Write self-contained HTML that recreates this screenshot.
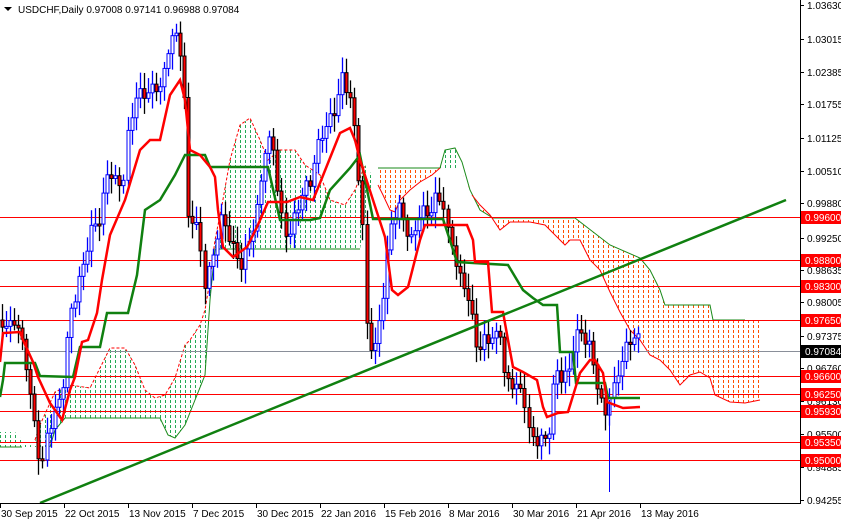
<!DOCTYPE html>
<html><head><meta charset="utf-8">
<style>
html,body{margin:0;padding:0;background:#fff;overflow:hidden}
svg{display:block}
text{font-family:"Liberation Sans","DejaVu Sans",sans-serif;font-size:10px}
</style></head>
<body>
<svg id="c" width="841" height="520" xmlns="http://www.w3.org/2000/svg">
<defs>
<clipPath id="cg1"><polygon points="0,432 15,432 22,440 30,445 40,447 25,447 0,447"/></clipPath>
<clipPath id="cg2"><polygon points="35,440 40,425 55,392 70,385 90,388 100,368 110,348 125,348 135,365 145,390 155,398 165,395 175,378 185,345 190,340 200,325 205,310 210,280 215,240 222,205 230,160 240,125 250,118 260,140 268,160 280,150 295,150 305,165 320,175 330,200 345,205 355,190 365,165 372,175 372,185 360,249 215,249 210,300 205,375 195,400 185,425 175,438 168,435 160,420 100,418 65,418 55,430 50,447 40,447"/></clipPath>
<clipPath id="co1"><polygon points="378,168 440,168 432,175 420,182 410,190 400,200 395,212 390,210 383,195 378,185"/></clipPath>
<clipPath id="cg3"><polygon points="440,168 445,150 455,148 460,160 460,168"/></clipPath>
<clipPath id="co2"><polygon points="460,168 470,190 480,210 493,218 575,218 610,245 640,258 650,270 660,290 665,305 710,305 713,320 760,320 760,400 745,403 730,402 715,395 710,378 700,372 690,375 680,385 670,370 660,360 650,355 640,340 630,330 620,312 610,292 600,270 590,260 580,240 570,240 565,245 560,240 545,225 530,222 510,222 500,230 490,215 480,205 472,195"/></clipPath>
</defs>
<rect width="841" height="520" fill="#fff"/>
<g id="clouds"></g>
<g>
<polyline fill="none" stroke="#1a8a1a" stroke-width="1" points="0,447 15,447 22,447"/>
<polyline fill="none" stroke="#ff0000" stroke-width="1" stroke-dasharray="3,2" points="35,440 40,425 55,392 70,385 90,388 100,368 110,348 125,348 135,365 145,390 155,398 165,395 175,378 185,345 190,340 200,325 205,310 210,280 215,240 222,205 230,160 240,125 250,118 260,140 268,160 280,150 295,150 305,165 320,175 330,200 345,205 355,190 365,165"/>
<polyline fill="none" stroke="#1a8a1a" stroke-width="1" points="50,447 55,430 65,418 160,418 168,435 175,438 185,425 195,400 205,375 210,300 215,249 360,249"/>
<polyline fill="none" stroke="#1a8a1a" stroke-width="1" points="378,168 440,168 445,150 455,148 462,162 470,190 480,210 493,218 575,218 610,245 640,258 650,270 660,290 665,305 710,305 713,320 745,320"/>
<polyline fill="none" stroke="#ff0000" stroke-width="1" points="378,185 383,195 390,210 395,212 400,200 410,190 420,182 432,175 440,168"/>
<polyline fill="none" stroke="#ff0000" stroke-width="1" points="472,195 480,205 490,215 500,230 510,222 530,222 545,225 560,240 565,245 570,240 580,240 590,260 600,270 610,292 620,312 630,330 640,340 650,355 660,360 670,370 680,385 690,375 700,372 710,378 715,395 730,402 745,403 760,400"/>
</g>
<g id="hl" stroke="#ff0000" stroke-width="1">
<line x1="0" x2="800" y1="217.5" y2="217.5"/>
<line x1="0" x2="800" y1="260.5" y2="260.5"/>
<line x1="0" x2="800" y1="286.5" y2="286.5"/>
<line x1="0" x2="800" y1="320.5" y2="320.5"/>
<line x1="0" x2="800" y1="376.5" y2="376.5"/>
<line x1="0" x2="800" y1="394.5" y2="394.5"/>
<line x1="0" x2="800" y1="411.5" y2="411.5"/>
<line x1="0" x2="800" y1="442.5" y2="442.5"/>
<line x1="0" x2="800" y1="460.5" y2="460.5"/>
</g>
<line x1="0" x2="800" y1="351.5" y2="351.5" stroke="#8a8f99" stroke-width="1"/>
<g id="candles"></g>
<polyline fill="none" stroke="#108010" stroke-width="2.5" points="0,397 3,380 5,363 35,363 40,376 73,377 80,347 100,347 107,313 128,313 137,275 145,210 160,200 175,175 185,155 205,155 210,167 268,167 280,220 310,220 320,218 330,190 350,168 360,155 373,219 443,219 457,262 508,265 523,290 533,298 543,305 557,305 560,352 573,352 576,383 605,383 608,398 640,398"/>
<polyline fill="none" stroke="#ff0000" stroke-width="2.5" points="0,362 3,333 20,332 23,340 33,362 38,377 50,403 62,420 70,390 75,377 82,342 88,340 97,313 102,280 110,235 125,200 140,150 150,140 160,140 170,95 180,80 185,100 190,150 200,155 210,167 215,177 218,210 223,247 233,257 247,247 257,227 268,202 287,202 300,197 313,200 320,183 330,158 340,133 350,128 355,140 360,160 385,237 392,290 398,295 408,287 420,240 425,225 467,225 473,240 475,262 488,262 492,312 503,312 508,340 513,367 523,372 537,380 543,407 547,417 558,413 568,412 580,373 590,360 595,360 603,373 607,402 623,408 640,407"/>
<line x1="40" y1="503" x2="786" y2="200" stroke="#108010" stroke-width="2.5"/>
<rect x="800" y="0" width="41" height="520" fill="#fff"/>
<rect x="0" y="503" width="841" height="17" fill="#fff"/>
<line x1="800.5" y1="0" x2="800.5" y2="504" stroke="#000"/>
<line x1="0" y1="503.5" x2="801" y2="503.5" stroke="#000"/>
<g id="axis" fill="#000"></g>
<text x="18" y="13" font-size="10.5">USDCHF,Daily  0.97008 0.97141 0.96988 0.97084</text>
<polygon points="4,7 12,7 8,11" fill="#000"/>
</svg>
<script>
(function(){
var NS="http://www.w3.org/2000/svg";
function el(p,n,a){var e=document.createElementNS(NS,n);for(var k in a)e.setAttribute(k,a[k]);p.appendChild(e);return e;}
var cl=document.getElementById('clouds');
[["cg1","#22aa55",0,40],["cg2","#22aa55",30,375],["co1","#ff5000",375,442],["cg3","#22aa55",440,462],["co2","#ff5000",458,762]].forEach(function(c){
 var g=el(cl,'g',{'clip-path':'url(#'+c[0]+')'});
 for(var x=c[2];x<=c[3];x+=5){el(g,'line',{x1:x+.5,x2:x+.5,y1:100,y2:460,stroke:c[1],'stroke-width':1,'stroke-dasharray':'3,2'});}
});
var ax=document.getElementById('axis');
var labels=[["1.03630",5],["1.03015",39],["1.02385",72],["1.01755",104],["1.01125",138],["1.00510",171],["0.99880",203],["0.99250",238],["0.98635",270],["0.98005",302],["0.97375",336],["0.96760",368],["0.96130",401],["0.95500",434],["0.94885",467],["0.94255",500]];
labels.forEach(function(l){el(ax,'line',{x1:800,x2:804,y1:l[1]+.5,y2:l[1]+.5,stroke:'#000'});var t=el(ax,'text',{x:807,y:l[1]+4});t.textContent=l[0];});
var red=[["0.99600",217],["0.98800",260],["0.98300",286],["0.97650",320],["0.96600",376],["0.96250",394],["0.95930",411],["0.95350",442],["0.95000",460]];
red.forEach(function(l){el(ax,'rect',{x:801,y:l[1]-6,width:40,height:13,fill:'#ff0000'});var t=el(ax,'text',{x:805,y:l[1]+4,fill:'#fff'});t.textContent=l[0];});
el(ax,'rect',{x:801,y:345,width:40,height:13,fill:'#000'});
var t=el(ax,'text',{x:805,y:355,fill:'#fff'});t.textContent="0.97084";
var dates=[["30 Sep 2015",0],["22 Oct 2015",64],["13 Nov 2015",128],["7 Dec 2015",192],["30 Dec 2015",256],["22 Jan 2016",320],["15 Feb 2016",384],["8 Mar 2016",448],["30 Mar 2016",512],["21 Apr 2016",576],["13 May 2016",640]];
dates.forEach(function(d){el(ax,'line',{x1:d[1]+.5,x2:d[1]+.5,y1:503,y2:508,stroke:'#000'});var t=el(ax,'text',{x:d[1]+1,y:517});t.textContent=d[0];});
var kp=[[2,325],[8,340],[15,330],[25,355],[32,400],[40,455],[48,445],[55,420],[62,390],[70,300],[80,270],[90,240],[100,230],[108,170],[118,175],[125,160],[135,110],[145,95],[155,75],[162,75],[170,35],[178,50],[183,80],[188,230],[195,215],[205,280],[212,270],[220,230],[230,240],[240,255],[250,230],[258,210],[265,160],[272,150],[280,215],[290,230],[300,210],[310,190],[320,130],[328,110],[335,100],[342,80],[350,110],[355,150],[362,230],[368,330],[375,345],[382,310],[390,240],[398,210],[405,220],[412,230],[420,200],[428,220],[435,210],[445,215],[452,230],[458,270],[465,290],[470,320],[478,365],[485,340],[492,330],[500,320],[505,375],[515,390],[522,410],[530,425],[540,430],[548,440],[555,380],[562,390],[568,380],[575,330],[582,320],[590,340],[596,380],[604,430],[610,400],[618,360],[625,340],[632,335],[636,345],[640,350]];
function f(x){for(var i=0;i<kp.length-1;i++){if(x<=kp[i+1][0]){var a=kp[i],b=kp[i+1];return a[1]+(b[1]-a[1])*(x-a[0])/(b[0]-a[0]);}}return kp[kp.length-1][1];}
var g=document.getElementById('candles');
var prev=f(0);
for(var x=2;x<=641;x+=4.05){
 var xi=Math.round(x);
 var c=f(xi)+Math.sin(xi*1.7)*12+Math.sin(xi*0.53)*6;
 if(xi>=639)c=350;
 var o=prev;prev=c;
 var top=Math.min(o,c),bot=Math.max(o,c);
 if(bot-top<2){bot=top+2;}
 var hi=top-4-Math.abs(Math.sin(xi*2.3))*12,lo=bot+4+Math.abs(Math.cos(xi*1.9))*12;
 var bull=c<o;
 var col=bull?'#0000ff':'#000';
 el(g,'line',{x1:xi+.5,x2:xi+.5,y1:hi,y2:lo,stroke:col,'stroke-width':1.3});
 if(bull) el(g,'rect',{x:xi-1,y:top,width:3,height:bot-top,fill:'#fff',stroke:col,'stroke-width':1});
 else el(g,'rect',{x:xi-1,y:top,width:3,height:bot-top,fill:'#ff0000',stroke:col,'stroke-width':1});
}
el(g,'line',{x1:609.5,x2:609.5,y1:400,y2:492,stroke:'#0000ff'});
})();
</script>
</body></html>
